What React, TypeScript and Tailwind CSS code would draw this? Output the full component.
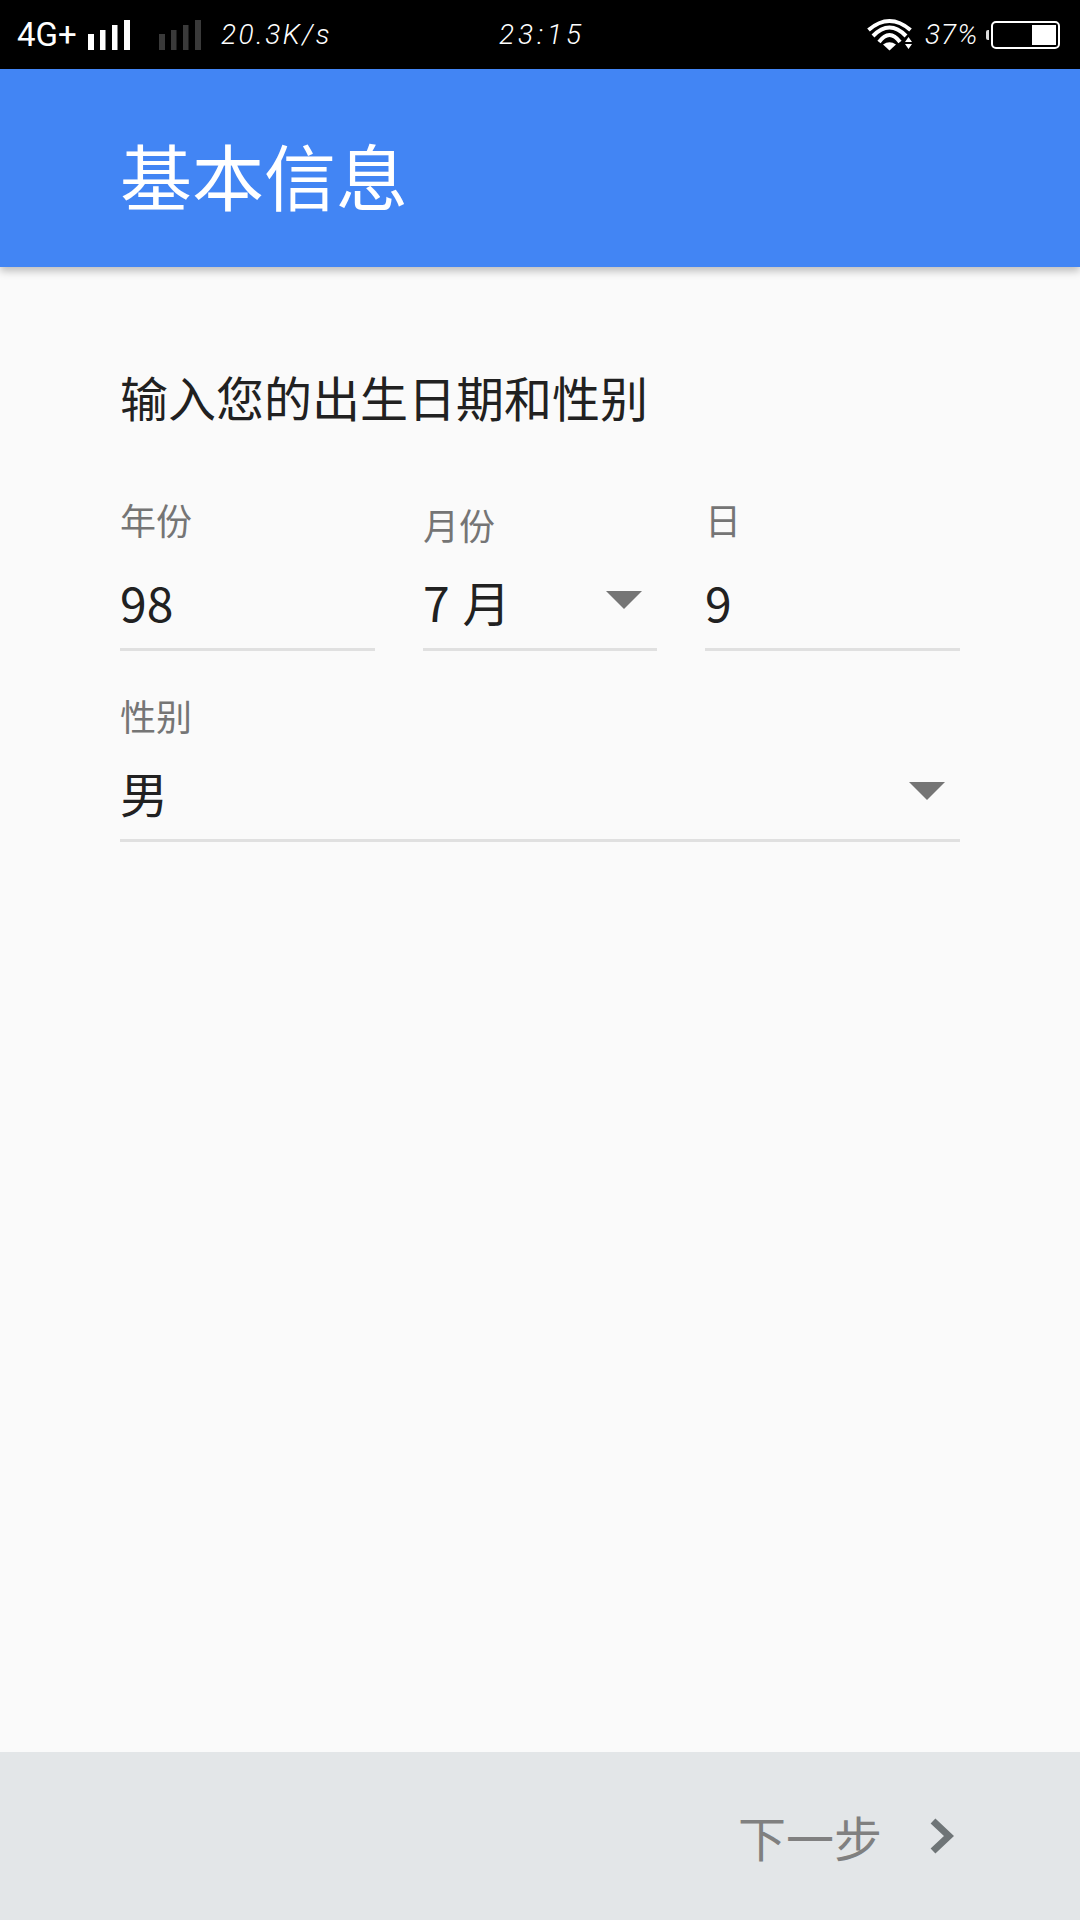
import React from "react";

const cjk = "font-['Noto_Sans_CJK_SC','Noto_Sans',sans-serif]";
const thin = "font-['Roboto',sans-serif] font-light italic text-white";

function Bars({ color, className }: { color: string; className: string }) {
  return (
    <svg width="42" height="30" viewBox="0 0 42 30" className={className}>
      <rect x="0" y="14" width="6" height="16" fill={color} />
      <rect x="12" y="10" width="5.5" height="20" fill={color} />
      <rect x="24" y="5" width="5.5" height="25" fill={color} />
      <rect x="36" y="0" width="6" height="30" fill={color} />
    </svg>
  );
}

function Wifi() {
  return (
    <svg width="46" height="33" viewBox="0 0 46 33">
      <path d="M1.5 12 Q22.5 -6 43.5 12 M6 18 Q22.5 1 39 18 M12 24 Q22.5 10 33 24" fill="none" stroke="#fff" strokeWidth="4" />
      <path d="M16 26.5 Q22.5 22 29 26.5 L22.5 32.5 Z" fill="#fff" />
      <path d="M38 24 L41.5 19 L45 24 Z M38 26 L45 26 L41.5 31 Z" fill="#fff" />
    </svg>
  );
}

function Triangle() {
  return (
    <svg width="36" height="18" viewBox="0 0 36 18" className="block">
      <path d="M0 0 H36 L18 18 Z" fill="#757575" />
    </svg>
  );
}

function Field({
  label,
  value,
  labelClass,
  rowClass,
  className,
  arrow,
}: {
  label: string;
  value: React.ReactNode;
  labelClass: string;
  rowClass: string;
  className: string;
  arrow?: boolean;
}) {
  return (
    <div className={`flex flex-col ${className}`}>
      <div className={`text-[36px] leading-[48px] text-[#757575] ${labelClass}`}>{label}</div>
      <div className={`flex items-center justify-between border-b-[3px] border-[#e0e0e0] text-[48px] leading-[64px] text-[#212121] ${rowClass}`}>
        <span className="whitespace-pre">{value}</span>
        {arrow && (
          <span className="mb-[1px] mr-[15px]">
            <Triangle />
          </span>
        )}
      </div>
    </div>
  );
}

export default function App() {
  return (
    <div className={`flex h-[1920px] w-[1080px] flex-col overflow-hidden bg-[#fafafa] ${cjk}`}>
      <div className="flex h-[69px] shrink-0 items-center bg-black">
        <div className="ml-[17px] w-[71px] font-['Roboto',sans-serif] text-[33px] leading-[38px] text-white">4G+</div>
        <Bars color="#fff" className="mt-[1px]" />
        <Bars color="#3a3a3a" className="ml-[29px] mt-[1px]" />
        <div className={`ml-[20px] w-[278px] text-[28px] leading-[36px] tracking-[2.5px] ${thin}`}>20.3K/s</div>
        <div className={`w-[368px] text-[28px] leading-[36px] tracking-[4px] ${thin}`}>23:15</div>
        <Wifi />
        <div className={`ml-[12px] w-[66px] text-[28px] leading-[36px] tracking-[1px] ${thin}`}>37%</div>
        <div className="relative h-[28px] w-[69px] rounded-[5px] border-2 border-white">
          <div className="absolute left-[-7px] top-[7px] h-[10px] w-[3px] rounded-l-[2px] bg-[#ddd]" />
          <div className="absolute bottom-[2px] right-[2px] top-[2px] w-[24px] bg-white" />
        </div>
      </div>

      <div className="relative z-10 flex h-[198px] shrink-0 items-center bg-[#4285f4] pl-[120px] pt-[12px] shadow-[0_4px_8px_rgba(0,0,0,0.25)]">
        <h1 className="text-[72px] leading-[96px] text-white">基本信息</h1>
      </div>

      <div className="flex flex-1 flex-col px-[120px]">
        <p className="mt-[97px] text-[48px] leading-[64px] text-[#212121]">输入您的出生日期和性别</p>
        <div className="mt-[66px] flex items-start gap-[48px]">
          <Field label="年份" value="98" className="mt-[1px] w-[255px]" labelClass="mb-[26px]" rowClass="h-[82px] pb-[16px]" />
          <Field
            label="月份"
            value={
              <>
                7 <span className="ml-[2px]">月</span>
              </>
            }
            className="w-[234px] pt-[6px]"
            labelClass="mb-[21px]"
            rowClass="h-[82px] pb-[16px]"
            arrow
          />
          <Field label="日" value="9" className="mt-[1px] w-[255px]" labelClass="mb-[26px]" rowClass="h-[82px] pb-[16px]" />
        </div>
        <Field label="性别" value="男" className="mt-[40px]" labelClass="mb-[15px]" rowClass="h-[88px] pb-[10px]" arrow />
      </div>

      <div className="flex h-[168px] shrink-0 items-center justify-end bg-[#e3e6e8] pr-[126px]">
        <span className="text-[48px] leading-[64px] text-[#808080]">下一步</span>
        <svg width="24" height="36" viewBox="0 0 24 36" className="ml-[48px]">
          <path d="M3 3 L19 18 L3 33" fill="none" stroke="#6f7577" strokeWidth="7" />
        </svg>
      </div>
    </div>
  );
}
